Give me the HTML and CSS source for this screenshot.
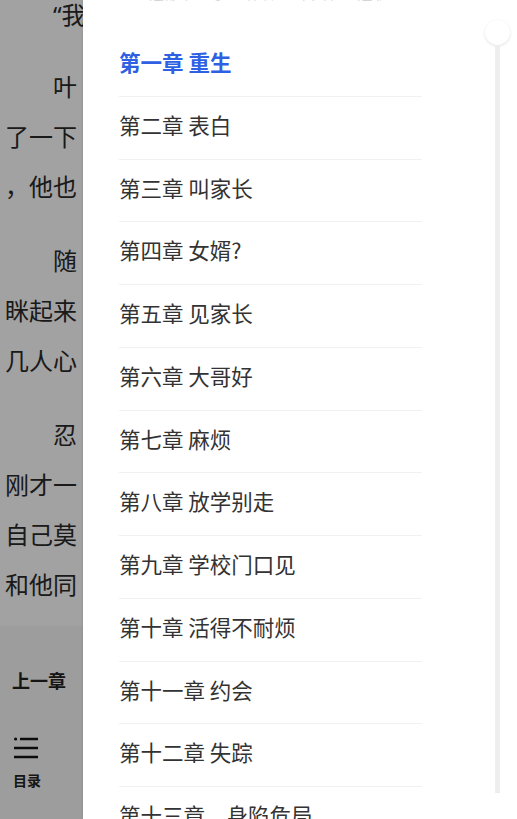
FILE: index.html
```html
<!DOCTYPE html>
<html lang="zh-CN">
<head>
<meta charset="utf-8">
<title>目录</title>
<link rel="stylesheet" href="styles.css">
</head>
<body>
<div class="app">
  <div class="reader">
    <div class="page">
      <div class="text">
        <p>“我</p>
        <p>叶<br>了一下<br>，他也</p>
        <p>随<br>眯起来<br>几人心</p>
        <p>忍<br>刚才一<br>自己莫<br>和他同</p>
      </div>
    </div>
    <div class="toolbar">
      <div class="chapter-nav">上一章</div>
      <div class="tools">
        <div class="tool">
          <svg class="tool-icon" viewBox="0 0 24 24" width="24" height="24">
            <circle cx="1.6" cy="3" r="1.6" fill="#141414"/>
            <path d="M6 3H24M0 12H24M0 21H24" stroke="#141414" stroke-width="2.4" fill="none"/>
          </svg>
          <span class="tool-label">目录</span>
        </div>
      </div>
    </div>
  </div>
  <div class="mask"></div>
  <aside class="drawer">
    <div class="catalog">
      <div class="catalog-head">重生之都市至尊 · 作者：云中客 · 连载中 · 共1286章</div>
      <ul class="chapters">
        <li class="chapter current">第一章 重生</li>
        <li class="chapter">第二章 表白</li>
        <li class="chapter">第三章 叫家长</li>
        <li class="chapter">第四章 女婿?</li>
        <li class="chapter">第五章 见家长</li>
        <li class="chapter">第六章 大哥好</li>
        <li class="chapter">第七章 麻烦</li>
        <li class="chapter">第八章 放学别走</li>
        <li class="chapter">第九章 学校门口见</li>
        <li class="chapter">第十章 活得不耐烦</li>
        <li class="chapter">第十一章 约会</li>
        <li class="chapter">第十二章 失踪</li>
        <li class="chapter">第十三章　身陷危局</li>
      </ul>
    </div>
    <div class="scroll-rail">
      <div class="scroll-thumb"></div>
      <div class="scroll-track"></div>
    </div>
  </aside>
</div>
</body>
</html>
```

FILE: styles.css
```css
html, body {
  margin: 0;
  padding: 0;
  height: 100%;
  overflow: hidden;
  background: #fff;
}

body {
  font-family: "Noto Sans CJK SC", "Noto Sans", sans-serif;
}

.app {
  position: relative;
  width: 517px;
  height: 819px;
  overflow: hidden;
}

.reader {
  display: flex;
  flex-direction: column;
  height: 100%;
  background: #fdfdfd;
}

.page {
  flex: 1;
  overflow: hidden;
}

.text {
  margin-top: -10px;
  padding-left: 5px;
  color: #2a2a2a;
  font-family: "Noto Sans", "Noto Sans CJK SC", sans-serif;
  font-size: 24px;
  line-height: 50px;
  white-space: nowrap;
}

.text p {
  margin: 0 0 24px;
  text-indent: 2em;
}

.text p:first-child {
  margin-bottom: 22px;
}

.toolbar {
  height: 193px;
  flex: none;
  background: #f6f6f6;
  padding: 41px 0 0 12px;
  box-sizing: border-box;
  color: #222;
}

.chapter-nav {
  font-size: 18px;
  line-height: 26px;
  font-weight: 700;
}

.tools {
  display: flex;
  margin-top: 43px;
}

.tool {
  display: flex;
  flex-direction: column;
  align-items: center;
  width: 30px;
}

.tool-icon {
  display: block;
  margin-left: -2px;
}

.tool-label {
  margin-top: 12px;
  font-size: 14px;
  line-height: 17px;
  font-weight: 700;
}

.mask {
  position: absolute;
  inset: 0;
  background: rgba(0, 0, 0, 0.36);
}

.drawer {
  position: absolute;
  top: 0;
  right: 0;
  bottom: 0;
  width: 434px;
  background: #fff;
  display: flex;
  box-shadow: -1px 0 2px rgba(0, 0, 0, 0.08);
}

.catalog {
  width: 303px;
  margin-left: 36px;
}

.catalog-head {
  margin-top: -18px;
  margin-bottom: 30px;
  font-size: 15px;
  line-height: 22px;
  color: #d4d4d4;
  white-space: nowrap;
  overflow: hidden;
  width: 262px;
}

.chapters {
  list-style: none;
  margin: 0;
  padding: 0;
}

.chapter {
  height: 62.75px;
  box-sizing: border-box;
  padding-top: 15px;
  font-size: 21.5px;
  line-height: 26px;
  color: #333;
  border-bottom: 1px solid #f1f1f1;
  white-space: nowrap;
}

.chapter.current {
  color: #2f5fe3;
  font-weight: 700;
}

.scroll-rail {
  margin-left: auto;
  margin-right: 7px;
  width: 26px;
  padding-top: 20px;
  display: flex;
  flex-direction: column;
  align-items: center;
}

.scroll-thumb {
  width: 25px;
  height: 25px;
  border-radius: 50%;
  background: #fff;
  box-shadow: 0 1px 3px rgba(0, 0, 0, 0.12);
  flex: none;
}

.scroll-track {
  width: 5px;
  height: 748px;
  background: #eeeeee;
  flex: none;
}
```
